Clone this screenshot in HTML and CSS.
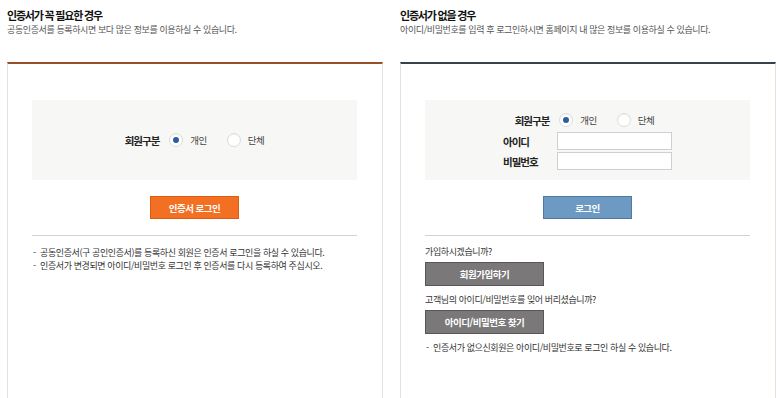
FILE: index.html
```html
<!DOCTYPE html>
<html lang="ko">
<head>
<meta charset="utf-8">
<title>로그인</title>
<link rel="stylesheet" href="styles.css">
</head>
<body>
<div class="page">
  <section class="col">
    <h2 class="title">인증서가 꼭 필요한 경우</h2>
    <p class="desc">공동인증서를 등록하시면 보다 많은 정보를 이용하실 수 있습니다.</p>
    <div class="panel panel-cert">
      <div class="box box-cert">
        <div class="radio-row">
          <span class="label">회원구분</span>
          <span class="radio checked"></span><span class="opt">개인</span>
          <span class="radio"></span><span class="opt">단체</span>
        </div>
      </div>
      <div class="btn-row"><button class="btn btn-orange">인증서 로그인</button></div>
      <div class="sep"></div>
      <ul class="notes">
        <li>공동인증서(구 공인인증서)를 등록하신 회원은 인증서 로그인을 하실 수 있습니다.</li>
        <li>인증서가 변경되면 아이디/비밀번호 로그인 후 인증서를 다시 등록하여 주십시오.</li>
      </ul>
    </div>
  </section>
  <section class="col">
    <h2 class="title">인증서가 없을 경우</h2>
    <p class="desc">아이디/비밀번호를 입력 후 로그인하시면 홈페이지 내 많은 정보를 이용하실 수 있습니다.</p>
    <div class="panel panel-id">
      <div class="box box-id">
        <div class="radio-row radio-row-id">
          <span class="label">회원구분</span>
          <span class="radio checked"></span><span class="opt">개인</span>
          <span class="radio"></span><span class="opt">단체</span>
        </div>
        <div class="field"><span class="flabel">아이디</span><span class="input"></span></div>
        <div class="field"><span class="flabel">비밀번호</span><span class="input"></span></div>
      </div>
      <div class="btn-row"><button class="btn btn-blue">로그인</button></div>
      <div class="sep"></div>
      <div class="links">
        <p class="ltext">가입하시겠습니까?</p>
        <button class="btn btn-gray">회원가입하기</button>
        <p class="ltext">고객님의 아이디/비밀번호를 잊어 버리셨습니까?</p>
        <button class="btn btn-gray">아이디/비밀번호 찾기</button>
        <ul class="notes notes-id">
          <li>인증서가 없으신회원은 아이디/비밀번호로 로그인 하실 수 있습니다.</li>
        </ul>
      </div>
    </div>
  </section>
</div>
</body>
</html>
```
FILE: styles.css
```css
* { box-sizing: border-box; }
html, body {
  margin: 0;
  padding: 0;
  background: #fff;
  height: 398px;
  overflow: hidden;
}
body {
  font-family: "Noto Sans CJK KR", "Noto Sans", sans-serif;
  color: #333;
}
.page {
  display: flex;
  gap: 17px;
  padding: 8px 0 0 7px;
}
.col {
  width: 376px;
  flex: none;
}
.title {
  margin: 0;
  font-size: 11px;
  line-height: 14px;
  font-weight: 700;
  color: #111;
  letter-spacing: -1.2px;
}
.desc {
  margin: 1px 0 0;
  font-size: 9px;
  line-height: 14px;
  color: #555;
  letter-spacing: -0.4px;
}
.panel {
  margin-top: 25px;
  height: 336px;
  border: 1px solid #e3e1dc;
  border-top: 2px solid #95502a;
  border-bottom: 0;
  padding: 36px 25px 0 24px;
}
.panel-id { border-top-color: #36434f; }
.box {
  width: 325px;
  background: #f7f7f5;
}
.box-cert {
  height: 80px;
  display: flex;
  align-items: center;
  justify-content: center;
}
.box-id {
  height: 80px;
  padding: 10px 0;
  display: flex;
  flex-direction: column;
  align-items: center;
  gap: 2px;
}
.radio-row {
  display: flex;
  align-items: center;
  height: 20px;
  font-size: 9.5px;
  letter-spacing: -0.5px;
}
.radio-row-id { margin-left: -6px; }
.label {
  font-weight: 700;
  font-size: 10.5px;
  color: #222;
  margin-right: 10px;
  letter-spacing: -1px;
}
.radio {
  width: 14px;
  height: 14px;
  border-radius: 50%;
  border: 1px solid #dcdcdc;
  background: #fff;
  box-shadow: inset 0 1px 1px rgba(0,0,0,0.06);
  margin-right: 7px;
  display: flex;
  align-items: center;
  justify-content: center;
}
.radio.checked::after {
  content: "";
  width: 6px;
  height: 6px;
  border-radius: 50%;
  background: #2a5e9c;
}
.opt {
  color: #444;
  margin-right: 20px;
}
.opt:last-child { margin-right: 0; }
.field {
  display: flex;
  align-items: center;
  height: 18px;
}
.flabel {
  width: 54px;
  font-weight: 700;
  font-size: 10.5px;
  color: #222;
  letter-spacing: -1px;
}
.input {
  width: 115px;
  height: 18px;
  background: #fff;
  border: 1px solid #cfcfcf;
}
.btn-row {
  width: 325px;
  display: flex;
  justify-content: center;
  margin-top: 16px;
}
.btn {
  font-family: inherit;
  font-weight: 700;
  font-size: 9.5px;
  letter-spacing: -0.5px;
  color: #fff;
  padding: 0;
  cursor: pointer;
}
.btn-orange {
  width: 89px;
  height: 23px;
  background: #f36f21;
  border: 1px solid #d95d15;
}
.btn-blue {
  width: 89px;
  height: 23px;
  background: #6c9ac3;
  border: 1px solid #4e7aa2;
}
.btn-gray {
  display: block;
  width: 119px;
  height: 24px;
  margin-top: 3px;
  background: #7a7879;
  border: 1px solid #585657;
}
.sep {
  width: 325px;
  height: 1px;
  background: #d4d2cb;
  margin-top: 16px;
}
.notes {
  list-style: none;
  margin: 10px 0 0;
  padding: 0 0 0 1px;
  font-size: 9px;
  line-height: 13px;
  color: #333;
  letter-spacing: -0.4px;
}
.notes li::before {
  content: "-";
  display: inline-block;
  width: 7px;
}
.links { margin-top: 9px; }
.ltext {
  margin: 0;
  font-size: 9px;
  line-height: 14px;
  color: #333;
  letter-spacing: -0.4px;
}
.btn-gray + .ltext { margin-top: 7px; }
.notes-id {
  margin-top: 7px;
  line-height: 14px;
}
```
